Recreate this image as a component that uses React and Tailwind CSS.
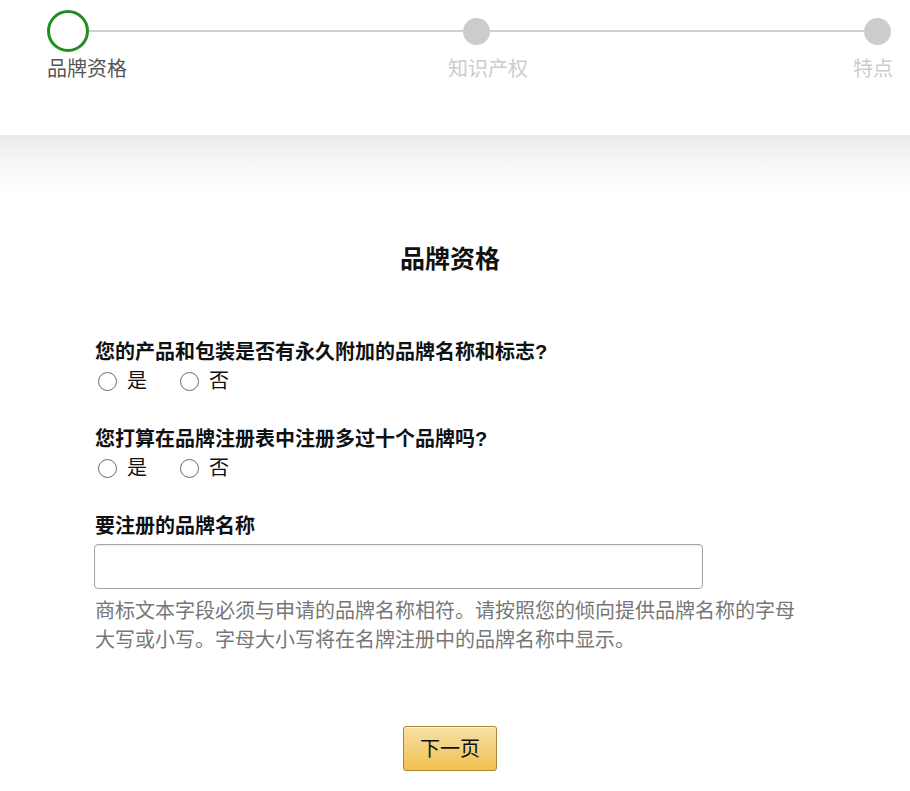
import React from 'react';

const font = { fontFamily: '"Liberation Sans", "Noto Sans CJK SC", sans-serif' };

function Radio({ label }) {
  return (
    <label className="flex items-center gap-[10px]">
      <span className="w-[19px] h-[19px] rounded-full border-[1.5px] border-[#6b6b6b] bg-white" />
      <span>{label}</span>
    </label>
  );
}

function Question({ title }) {
  return (
    <div>
      <p className="font-bold text-[20px] leading-[28px] text-[#111]">{title}</p>
      <div className="flex items-center gap-[33px] text-[20px] leading-[28px] text-[#111] pl-[3px] mt-[1px]">
        <Radio label="是" />
        <Radio label="否" />
      </div>
    </div>
  );
}

export default function App() {
  return (
    <div className="min-h-screen bg-white" style={font}>
      {/* Stepper */}
      <div className="h-[135px] bg-white pt-[10px] pl-[47px] pr-[19px]">
        <div className="flex items-center">
          <div className="w-[42px] h-[42px] rounded-full border-[3px] border-[#1f8f1f] shrink-0" />
          <div className="flex-1 h-[2px] bg-[#d0d0d0]" />
          <div className="w-[27px] h-[27px] rounded-full bg-[#cccccc] shrink-0" />
          <div className="flex-1 h-[2px] bg-[#d0d0d0]" />
          <div className="w-[27px] h-[27px] rounded-full bg-[#cccccc] shrink-0" />
        </div>
        <div className="grid grid-cols-[1fr_auto_1fr] mt-[5px] text-[20px] leading-[24px]">
          <span className="text-[#555]">品牌资格</span>
          <span className="text-[#cccccc] ml-[38px]">知识产权</span>
          <span className="text-[#cccccc] text-right -mr-[2px]">特点</span>
        </div>
      </div>

      {/* shadow band */}
      <div className="h-[60px] bg-gradient-to-b from-[#ebebeb] via-[#f7f7f7] to-white" />

      <div className="pt-[48px]">
        <h1 className="w-[900px] text-center font-bold text-[25px] leading-[32px] text-[#111]">品牌资格</h1>

        <div className="ml-[95px] mt-[63px] flex flex-col gap-[30px]">
          <Question title="您的产品和包装是否有永久附加的品牌名称和标志?" />
          <Question title="您打算在品牌注册表中注册多过十个品牌吗?" />
          <div>
            <p className="font-bold text-[20px] leading-[28px] text-[#111]">要注册的品牌名称</p>
            <input
              type="text"
              className="block mt-[4px] -ml-[1px] w-[609px] h-[45px] rounded-[4px] border border-[#a6a6a6] shadow-[inset_0_1px_1px_rgba(0,0,0,0.08)] outline-none px-2"
            />
            <p className="mt-[8px] w-[700px] text-[20px] leading-[29px] text-[#777]">
              商标文本字段必须与申请的品牌名称相符。请按照您的倾向提供品牌名称的字母大写或小写。字母大小写将在名牌注册中的品牌名称中显示。
            </p>
          </div>
        </div>

        <div className="w-[900px] flex justify-center mt-[71px]">
          <button className="w-[94px] h-[45px] rounded-[3px] border border-[#a88734] bg-gradient-to-b from-[#f7dfa5] to-[#f0c14b] text-[20px] text-[#111] shadow-[inset_0_1px_0_rgba(255,255,255,0.6)]">
            下一页
          </button>
        </div>
      </div>
    </div>
  );
}
